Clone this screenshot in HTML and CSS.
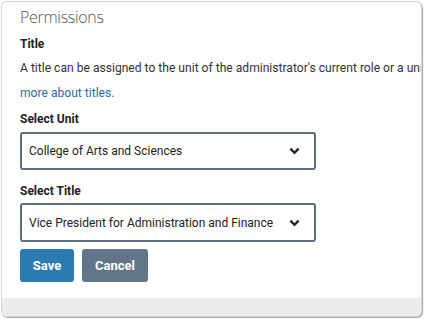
FILE: index.html
```html
<!DOCTYPE html>
<html lang="en">
<head>
  <meta charset="UTF-8">
  <meta name="viewport" content="width=device-width, initial-scale=1.0">
  <title>Permissions</title>
  <link rel="stylesheet" href="styles.css">
</head>
<body>

  <!-- Thẻ quyền hạn -->
  <div class="card">
    <div class="card-body">
      <h2>Permissions</h2>

      <div class="label first">Title</div>
      <p class="help">A title can be assigned to the unit of the administrator's current role or a unit within that unit. Learn</p>
      <a class="link" href="#">more about titles.</a>

      <div class="label">Select Unit</div>
      <div class="select">
        <span>College of Arts and Sciences</span>
        <svg class="chevron" viewBox="0 0 12 8"><path d="M1.5 1.5 L6 6 L10.5 1.5" /></svg>
      </div>

      <div class="label">Select Title</div>
      <div class="select tall">
        <span>Vice President for Administration and Finance</span>
        <svg class="chevron" viewBox="0 0 12 8"><path d="M1.5 1.5 L6 6 L10.5 1.5" /></svg>
      </div>

      <div class="actions">
        <button class="btn save">Save</button>
        <button class="btn cancel">Cancel</button>
      </div>
    </div>
    <div class="card-footer"></div>
  </div>

</body>
</html>
```

FILE: styles.css
```css
body {
  margin: 0;
  padding: 0;
  background: #ffffff;
  font-family: Roboto, Arial, sans-serif;
  color: #222;
}

/* Thẻ chính */
.card {
  margin: 1px 2px 3px 1px;
  height: 316px;
  box-sizing: border-box;
  border: 1px solid #d6d6d6;
  border-radius: 6px;
  box-shadow: 1px 1px 1px rgba(0,0,0,0.35);
  overflow: hidden;
  display: flex;
  flex-direction: column;
  background: #fff;
}
.card-body {
  flex: 1;
  padding: 0 18px;
}
.card-footer {
  height: 18px;
  background: #ececec;
}

h2 {
  margin: 4px 0 0;
  font-family: "Open Sans", sans-serif;
  font-weight: 300;
  font-size: 16px;
  line-height: 22px;
  letter-spacing: -0.3px;
  color: #555;
}

.label {
  margin-top: 10px;
  font-size: 12px;
  font-weight: bold;
  line-height: 16px;
  color: #222;
}
.label.first {
  margin-top: 8px;
}
.help {
  margin: 8px 0 0;
  font-size: 12.1px;
  line-height: 16px;
  white-space: nowrap;
  color: #333;
}
.link {
  display: block;
  margin-top: 9px;
  font-size: 12.1px;
  line-height: 16px;
  color: #2a6ea6;
  text-decoration: none;
}

/* Ô chọn */
.select {
  margin-top: 5px;
  margin-bottom: 13px;
  width: 296px;
  height: 38px;
  box-sizing: border-box;
  border: 2px solid #5d6f80;
  border-radius: 3px;
  display: flex;
  align-items: center;
  justify-content: space-between;
  padding: 0 14px 0 7px;
  font-size: 12px;
  color: #222;
}
.select.tall {
  height: 39px;
  margin-top: 4px;
  margin-bottom: 0;
}
.chevron {
  width: 11px;
  height: 8px;
  fill: none;
  stroke: #222;
  stroke-width: 2.6;
}

/* Nút */
.actions {
  margin-top: 7px;
  display: flex;
  gap: 8px;
}
.btn {
  height: 33px;
  border: none;
  border-radius: 3px;
  color: #fff;
  font-family: Roboto, Arial, sans-serif;
  font-size: 13px;
  font-weight: bold;
  padding: 0;
}
.btn.save {
  background: #2b7bb1;
  width: 54px;
}
.btn.cancel {
  background: #637689;
  width: 66px;
}
```
